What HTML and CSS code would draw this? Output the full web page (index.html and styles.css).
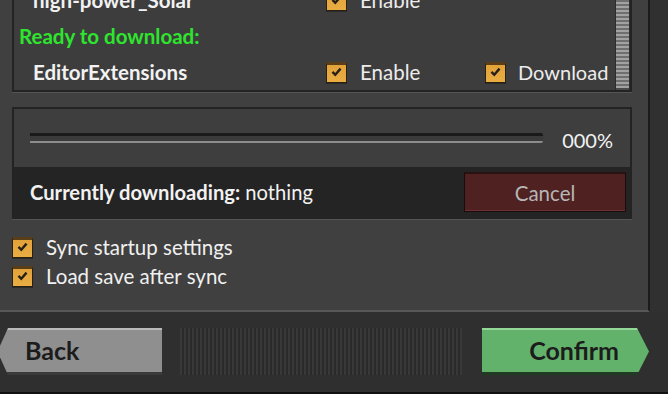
FILE: index.html
```html
<!DOCTYPE html>
<html lang="en">
<head>
    <meta charset="UTF-8">
    <title>Sync mods with server</title>
    <link rel="stylesheet" href="styles.css">
</head>
<body>
    <div class="screen">
        <div class="panel">
            <div class="mod-list">
                <div class="rows">
                    <div class="row">
                        <span class="name">high-power_Solar</span>
                        <label class="opt"><span class="check"><svg viewBox="0 0 21 21"><path d="M5.5 11 L9 14.5 L15.5 7"/></svg></span>Enable</label>
                        <span></span>
                    </div>
                    <div class="row">
                        <span class="group">Ready to download:</span>
                    </div>
                    <div class="row">
                        <span class="name">EditorExtensions</span>
                        <label class="opt"><span class="check"><svg viewBox="0 0 21 21"><path d="M5.5 11 L9 14.5 L15.5 7"/></svg></span>Enable</label>
                        <label class="opt"><span class="check"><svg viewBox="0 0 21 21"><path d="M5.5 11 L9 14.5 L15.5 7"/></svg></span>Download</label>
                    </div>
                </div>
                <div class="scrollbar"><div class="thumb"></div></div>
            </div>

            <div class="progress-box">
                <div class="progress-row">
                    <div class="bar"></div>
                    <span class="percent">000%</span>
                </div>
                <div class="status-row">
                    <span class="status"><b>Currently downloading:</b> nothing</span>
                    <button class="btn-cancel">Cancel</button>
                </div>
            </div>

            <div class="options">
                <label class="opt"><span class="check"><svg viewBox="0 0 21 21"><path d="M5.5 11 L9 14.5 L15.5 7"/></svg></span>Sync startup settings</label>
                <label class="opt"><span class="check"><svg viewBox="0 0 21 21"><path d="M5.5 11 L9 14.5 L15.5 7"/></svg></span>Load save after sync</label>
            </div>
        </div>

        <div class="footer">
            <button class="btn-back">Back</button>
            <div class="filler"></div>
            <button class="btn-confirm">Confirm</button>
        </div>
    </div>
</body>
</html>
```

FILE: styles.css
```css
html,
body {
    margin: 0;
    padding: 0;
}
body {
    background-color: #303030;
    font-family: Lato, "Liberation Sans", sans-serif;
    color: #f2f2f2;
    width: 668px;
    height: 394px;
    overflow: hidden;
}
.screen {
    display: flex;
    flex-direction: column;
    height: 394px;
}
.panel {
    width: 620px;
    height: 310px;
    padding: 0 16px 0 12px;
    background-color: #404040;
    border-right: 2px solid #1c1c1c;
    border-bottom: 2px solid #575757;
}

/* mod list */
.mod-list {
    display: flex;
    margin-top: -20px;
    height: 108px;
    border: 2px solid #232323;
    background-color: #3d3d3d;
    box-shadow: 0 1px 0 #555;
}
.rows {
    flex: 1;
}
.row {
    display: grid;
    grid-template-columns: 312px 159px 1fr;
    align-items: center;
    height: 36px;
}
.name {
    padding-left: 19px;
    font-weight: bold;
    font-size: 20.5px;
}
.group {
    padding-left: 5px;
    font-weight: bold;
    font-size: 20.5px;
    color: #2ee52e;
}
.opt {
    display: flex;
    align-items: center;
    gap: 13px;
    height: 21px;
    line-height: 21px;
    font-size: 20.5px;
    color: #ececec;
}
.row .opt:last-child {
    gap: 12px;
    font-size: 20px;
}
.check {
    width: 21px;
    height: 21px;
    box-sizing: border-box;
    flex: none;
    border: 1px solid #2a2010;
    border-top: 3px solid #5a3e18;
    background: linear-gradient(#e2a23a, #e9ad44);
    box-shadow: 0 1px 0 #2a2a2a;
}
.check svg {
    display: block;
    width: 19px;
    height: 17px;
    margin-top: -2px;
}
.check path {
    fill: none;
    stroke: #262019;
    stroke-width: 3;
}
.scrollbar {
    width: 15px;
    background-color: #2c2c2c;
}
.thumb {
    height: 106px;
    margin: 0 1px;
    border-bottom: 2px solid #4a4a4a;
    background: repeating-linear-gradient(#a2a2a2 0, #a2a2a2 2px, #6e6e6e 2px, #6e6e6e 4px);
}

/* download progress */
.progress-box {
    margin-top: 15px;
    border: 2px solid #232323;
    box-shadow: 0 1px 0 #555;
}
.progress-row {
    display: flex;
    align-items: center;
    height: 58px;
    padding: 0 17px 0 16px;
    background-color: #3e3e3e;
}
.bar {
    flex: 1;
    height: 10px;
    box-sizing: border-box;
    border-top: 3px solid #1a1a1a;
    border-bottom: 2px solid #8c8c8c;
    border-radius: 0 2px 2px 0;
    background-color: #3a3a3a;
}
.percent {
    margin-left: 19px;
    font-size: 20px;
    padding-top: 3px;
}
.status-row {
    display: flex;
    align-items: center;
    justify-content: space-between;
    height: 50px;
    padding: 0 4px 0 16px;
    background-color: #242424;
}
.status {
    font-size: 20.2px;
}
.btn-cancel {
    width: 162px;
    height: 40px;
    border: 1px solid #1a0c0c;
    border-top: 2px solid #2a1212;
    background-color: #4f2121;
    box-shadow: inset 0 -1px 0 #6a3232;
    font-family: inherit;
    font-size: 20.5px;
    color: #b6b6b6;
}

/* startup options */
.options {
    display: flex;
    flex-direction: column;
    gap: 8px;
    margin-top: 18px;
}
.options .opt {
    gap: 13px;
    color: #f0f0f0;
}

/* bottom bar */
.footer {
    display: flex;
    align-items: flex-start;
    flex: 1;
    padding-top: 16px;
    background-color: #2f2f2f;
    border-bottom: 2px solid #111;
}
.footer button {
    height: 47px;
    border: 0;
    padding-bottom: 5px;
    font-family: inherit;
    font-weight: bold;
    font-size: 25px;
    color: #1c1c1c;
}
.btn-back {
    width: 162px;
    padding-left: 25px;
    text-align: left;
    background: linear-gradient(#b9b9b9 0, #b9b9b9 2px, #8f8f8f 2px, #8f8f8f 44px, #3a3a3a 44px);
    clip-path: polygon(8px 0, 100% 0, 100% 100%, 8px 100%, 0 62%, 0 38%);
}
.filler {
    width: 282px;
    height: 47px;
    margin: 0 20px 0 18px;
    background: repeating-linear-gradient(90deg, #383838 0, #383838 2px, #2a2a2a 2px, #2a2a2a 4px);
}
.btn-confirm {
    width: 167px;
    padding-right: 30px;
    text-align: right;
    background: linear-gradient(#94d898 0, #94d898 2px, #63b26c 2px, #63b26c 44px, #1f3b22 44px);
    clip-path: polygon(0 0, calc(100% - 12px) 0, 100% 50%, calc(100% - 12px) 100%, 0 100%);
}
```
